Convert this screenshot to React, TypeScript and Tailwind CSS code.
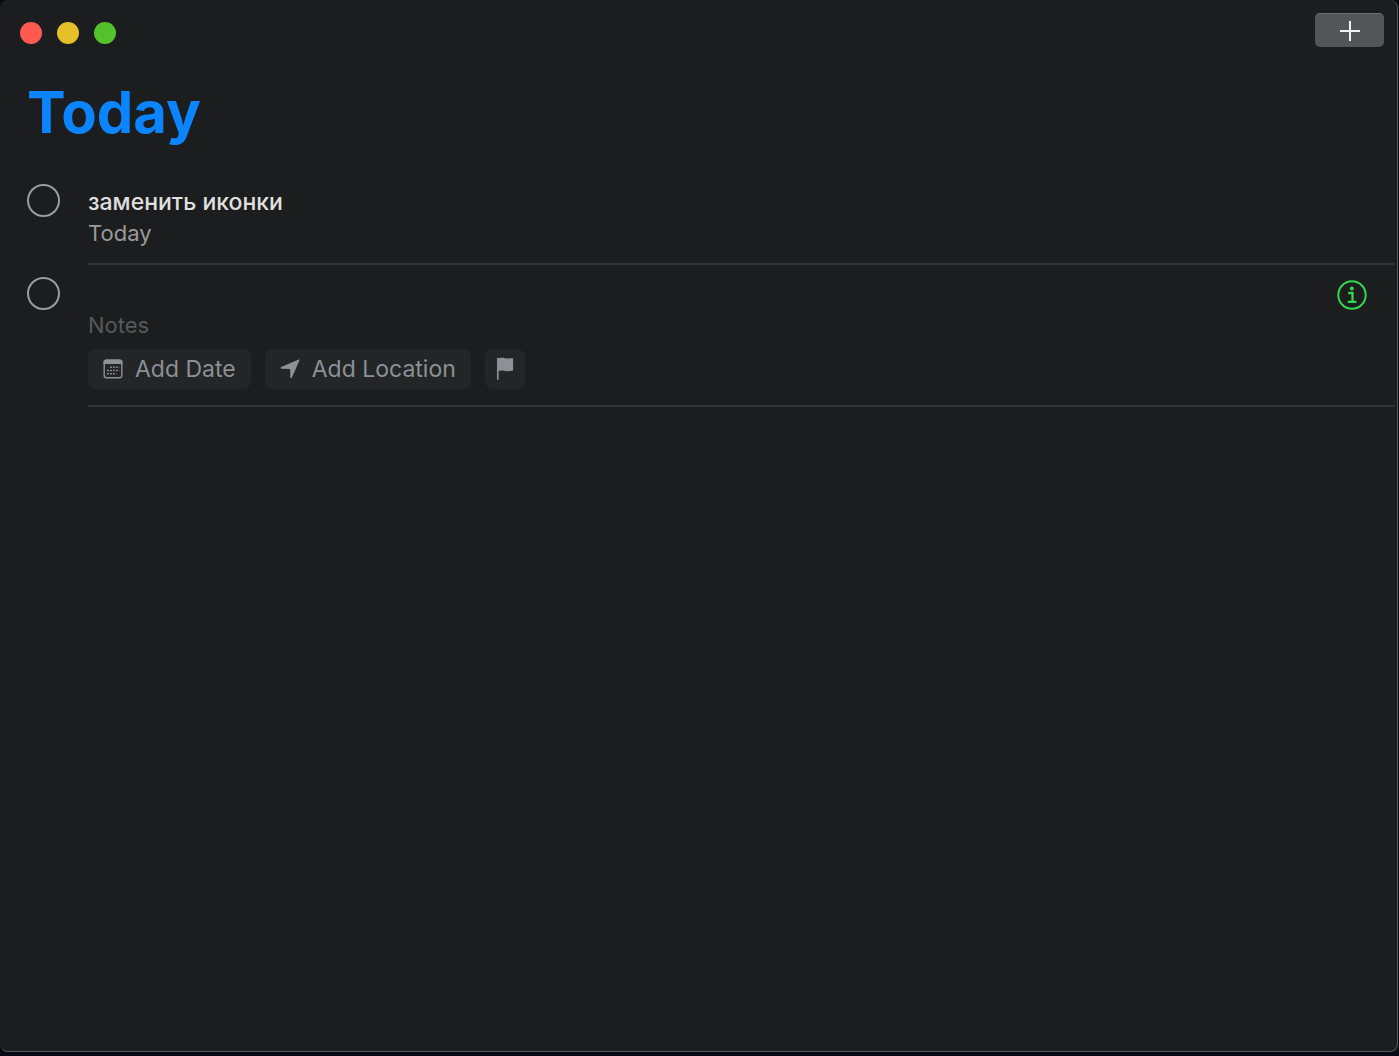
import { useState } from "react";

interface Reminder {
  id: number;
  title: string;
  due?: string;
}

const reminders: Reminder[] = [{ id: 1, title: "заменить иконки", due: "Today" }];

function CalendarIcon() {
  return (
    <svg width="20" height="20" viewBox="0 0 20 20" fill="none" aria-hidden="true">
      <rect x="1.2" y="1.2" width="17.6" height="17.6" rx="2.2" stroke="currentColor" strokeWidth="1.4" />
      <path d="M.5 5V3.1A2.6 2.6 0 0 1 3.100.5h13.800A2.600 2.600 0 0 1 19.500 3.100V5z" fill="currentColor" />
      <path d="M7 8.200h9.300M4 11.500h12.300M4 14.800h9.300" stroke="currentColor" strokeWidth="1.600" strokeDasharray="1.800 1.200" />
    </svg>
  );
}

function LocationIcon() {
  return (
    <svg width="20" height="20" viewBox="0 0 20 20" fill="currentColor" aria-hidden="true">
      <path d="M18.700.6c.6-.2 1 .2.700.8L11.900 18.500c-.4.900-1.600.700-1.600-.3l-.1-7.600c0-.4-.2-.6-.6-.6L1.500 9.700C.4 9.700.2 8.600 1.200 8.100z" />
    </svg>
  );
}

function FlagIcon() {
  return (
    <svg width="18" height="24" viewBox="0 0 18 24" fill="currentColor" aria-hidden="true">
      <rect x="1" y=".8" width="1.6" height="22.2" rx=".8" />
      <path d="M1 1.700C3.600.6 6.200.7 8.900 1.200c2.700.4 5 .4 7.300-.1.500-.1.900.1.900.6v11c0 .6-.3.900-.8 1-2.500.6-5 .6-7.600.2-2.300-.4-4.700-.5-6.900.3z" />
    </svg>
  );
}

function InfoIcon() {
  return (
    <svg width="30" height="30" viewBox="0 0 30 30" fill="none" aria-hidden="true">
      <circle cx="15" cy="15" r="13.700" stroke="currentColor" strokeWidth="2" />
      <circle cx="14.800" cy="8.600" r="2" fill="currentColor" />
      <path d="M11.200 13h4.300v8.300M10.800 21.800h8.600" stroke="currentColor" strokeWidth="2.300" />
    </svg>
  );
}

function Check({ label }: { label: string }) {
  return (
    <input
      type="checkbox"
      aria-label={label}
      className="mt-3 size-[33px] shrink-0 appearance-none rounded-full border-2 border-[#9c9c9d] checked:bg-[#0a84ff]"
    />
  );
}

export default function App() {
  const [title, setTitle] = useState("");
  const [notes, setNotes] = useState("");

  return (
    <div className="flex min-h-screen flex-col bg-[#070b14] pr-px pb-1 font-['Inter',sans-serif] text-[22px] leading-[31px]">
      <div className="flex grow flex-col rounded-lg border-r border-b border-[#58595a] bg-[#1c1d1e]">
        <header className="flex items-start justify-between pt-[13px] pr-[13px] pl-5">
          <div className="flex gap-[15px] pt-[9px]">
            <button type="button" aria-label="Close" className="size-[22px] rounded-full bg-[#ff5a52]" />
            <button type="button" aria-label="Minimize" className="size-[22px] rounded-full bg-[#e6c029]" />
            <button type="button" aria-label="Zoom" className="size-[22px] rounded-full bg-[#54c22b]" />
          </div>
          <button
            type="button"
            aria-label="New reminder"
            className="flex h-[34px] w-[69px] items-center justify-center rounded-[5px] border-t border-[#6b6c6d] bg-[#545556] text-[#f2f2f2]"
          >
            <svg width="22" height="22" viewBox="0 0 22 22" aria-hidden="true">
              <path d="M11 1v20M1 11h20" stroke="currentColor" strokeWidth="2" />
            </svg>
          </button>
        </header>

        <main className="pr-0.5 pl-[27px]">
          <h1 className="mt-[29px] mb-6 text-[58px] leading-[72px] font-bold text-[#0a84ff]">Today</h1>

          <ul>
            {reminders.map((r) => (
              <li key={r.id} className="flex gap-7">
                <Check label={r.title} />
                <div className="grow border-b-2 border-[#333435] pt-[15px] pb-[14px]">
                  <p className="text-[23px] font-medium text-[#e0e0e0]">{r.title}</p>
                  <p className="text-[#9a9a9a]">{r.due}</p>
                </div>
              </li>
            ))}

            {/* Reminder being edited */}
            <li className="flex gap-7">
              <Check label="New reminder" />
              <div className="grow border-b-2 border-[#333435] pt-[14px] pb-4">
                <div className="flex items-center justify-between pr-7">
                  <input
                    aria-label="Title"
                    value={title}
                    onChange={(e) => setTitle(e.target.value)}
                    className="h-[31px] grow bg-transparent text-[23px] font-medium text-[#e0e0e0] outline-none"
                  />
                  <button type="button" aria-label="Details" className="text-[#32d74b]">
                    <InfoIcon />
                  </button>
                </div>
                <input
                  aria-label="Notes"
                  placeholder="Notes"
                  value={notes}
                  onChange={(e) => setNotes(e.target.value)}
                  className="block h-[31px] w-full bg-transparent text-[#9a9a9a] outline-none placeholder:text-[#58595a]"
                />
                <div className="mt-2 flex gap-[14px] text-[23px] text-[#8b9197]">
                  <button type="button" className="flex h-10 items-center gap-3 rounded-lg bg-[#242526] px-[15px]">
                    <CalendarIcon />
                    Add Date
                  </button>
                  <button type="button" className="flex h-10 items-center gap-3 rounded-lg bg-[#242526] px-[15px]">
                    <LocationIcon />
                    Add Location
                  </button>
                  <button type="button" aria-label="Flag" className="flex size-10 items-center justify-center rounded-lg bg-[#242526]">
                    <FlagIcon />
                  </button>
                </div>
              </div>
            </li>
          </ul>
        </main>
      </div>
    </div>
  );
}
